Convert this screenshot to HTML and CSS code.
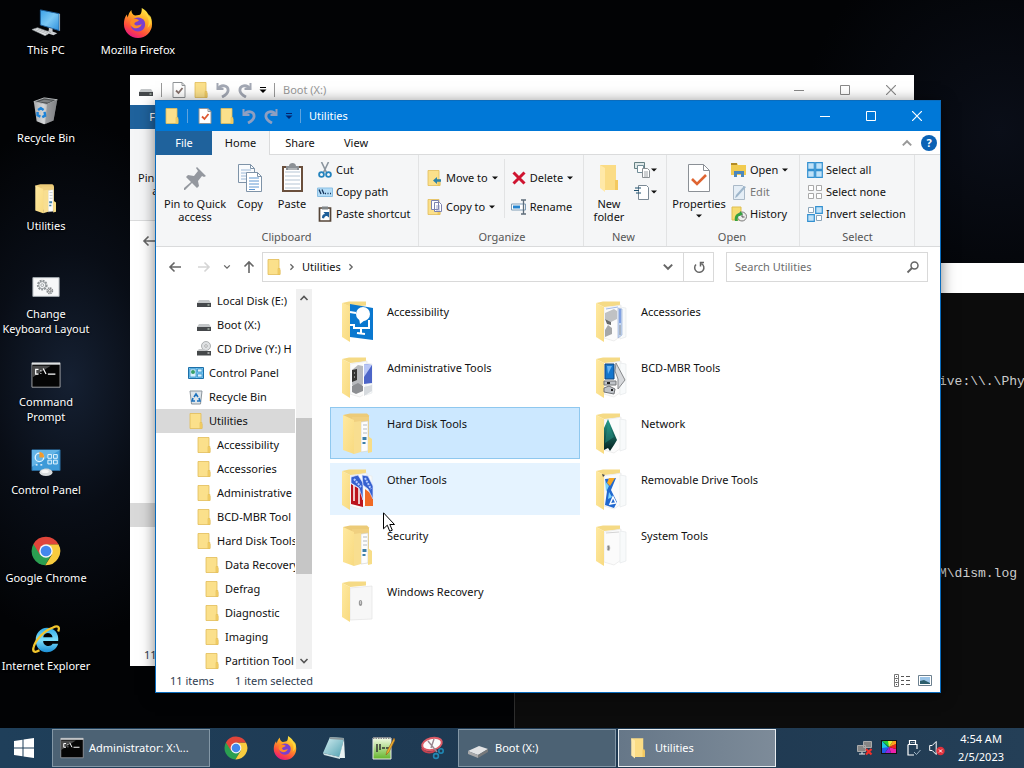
FILE: index.html
```html
<!DOCTYPE html>
<html lang="en">
<head>
    <meta charset="UTF-8">
    <title>Utilities</title>
    <link rel="stylesheet" href="styles.css">
</head>
<body>
    <!-- icon set -->
    <svg class="sprite" width="0" height="0" aria-hidden="true">
        <defs>
            <linearGradient id="gScreen" x1="0" y1="0" x2="1" y2="1"><stop offset="0" stop-color="#3aa0e8"/><stop offset=".5" stop-color="#7cc8f4"/><stop offset="1" stop-color="#2b8fdd"/></linearGradient>
            <linearGradient id="gFolder" x1="0" y1="0" x2="1" y2="1"><stop offset="0" stop-color="#ffe9a0"/><stop offset="1" stop-color="#f8da80"/></linearGradient>
            <linearGradient id="gFox" x1=".8" y1="0" x2=".3" y2="1"><stop offset="0" stop-color="#fff14a"/><stop offset=".4" stop-color="#ffa423"/><stop offset=".75" stop-color="#ff4a3d"/><stop offset="1" stop-color="#e31587"/></linearGradient>
            <linearGradient id="gIe" x1="0" y1="0" x2="0" y2="1"><stop offset="0" stop-color="#2fa9e6"/><stop offset=".5" stop-color="#7fe0fb"/><stop offset="1" stop-color="#1c8fd6"/></linearGradient>
            <linearGradient id="gBin" x1="0" y1="0" x2="1" y2="0"><stop offset="0" stop-color="#a9abad"/><stop offset=".4" stop-color="#d5d7d9"/><stop offset="1" stop-color="#8c8e90"/></linearGradient>
            <linearGradient id="gGreen" x1="0" y1="0" x2="0" y2="1"><stop offset="0" stop-color="#f4fbe6"/><stop offset="1" stop-color="#63b52a"/></linearGradient>
            <linearGradient id="gNote" x1="0" y1="0" x2="1" y2="1"><stop offset="0" stop-color="#d7f0f3"/><stop offset="1" stop-color="#4fa0b0"/></linearGradient>
            <linearGradient id="gNet" x1="0" y1="0" x2="0" y2="1"><stop offset="0" stop-color="#2aa08e"/><stop offset="1" stop-color="#05201f"/></linearGradient>
        </defs>

        <symbol id="pc" viewBox="0 0 32 32">
            <path d="M10 2l20 4v18l-20-6z" fill="url(#gScreen)" stroke="#1d5f9c"/>
            <path d="M30 6l1 .5v18l-1-.5z" fill="#9fb4c4"/>
            <path d="M19 21l4 1v3l5 2-4 2-9-3 4-2z" fill="#c8ccd0"/>
            <path d="M1 23l6-2 14 5-6 3.500z" fill="#e8eaec" stroke="#8d9296" stroke-width=".7"/>
            <path d="M4 23l13 4.600M6.500 22.300l12 4.200" stroke="#9ba0a4" stroke-width=".7"/>
        </symbol>
        <symbol id="bin" viewBox="0 0 32 32">
            <path d="M3 6l11-4 14 2-11 5z" fill="#4d5052" stroke="#b9bcbe"/>
            <path d="M8 6l6-2 9 1-5 2z" fill="#7e8183"/>
            <path d="M3 6l14 3 11-5-4 22-10 4-8-3z" fill="url(#gBin)"/>
            <path d="M17 9l11-5-4 22-9 4z" fill="#77797b" opacity=".55"/>
            <path d="M7.500 15l3-2 3 2M14.500 17l.5 4-3 1.500M10 22l-3-1.500V17" fill="none" stroke="#1d83d8" stroke-width="2.600"/>
        </symbol>
        <symbol id="openfolder" viewBox="0 0 32 42">
            <path d="M1 2l7-1.500h17l2 2v33l-12 3z" fill="#eccb78"/>
            <path d="M10 4h17v32H12z" fill="#f0d080"/>
            <path d="M19 9l7-1v30l-7 1z" fill="#fdfdfd" stroke="#d0d0c8" stroke-width=".6"/>
            <path d="M21 12h4M21 16h4M21 20h4" stroke="#b3bbc2"/>
            <path d="M20.500 24h4v3h-4zM20.500 29h3v2h-3z" fill="#3d7fa8"/>
            <path d="M26 23l4 3v13l-4 1z" fill="#f7dd88"/>
            <path d="M1 2l11 5v34L1 37z" fill="url(#gFolder)"/>
            <path d="M12 9l7-1v31l-7 2z" fill="#f8de90"/>
        </symbol>
        <symbol id="paperfolder" viewBox="0 0 32 42">
            <path d="M0 2l7-1.500h17v4L8 6z" fill="#f5da85"/>
            <path d="M8 7l17-3v31l-7 5-10-3z" fill="#fbfbfb" stroke="#e6e6e6" stroke-width=".7"/>
            <path d="M24 6l6 1v29l-6 2z" fill="#f8fafb" stroke="#e6e9eb" stroke-width=".7"/>
            <path d="M0 2l8 4v35l-8-5z" fill="url(#gFolder)"/>
        </symbol>
        <symbol id="access" viewBox="0 0 32 42">
            <path d="M0 2l7-1.500h17v4L8 6z" fill="#f5da85"/>
            <path d="M0 2l8 3v36l-8-5z" fill="url(#gFolder)"/>
            <path d="M8 3l23 4v32L8 36z" fill="#0a78cf"/>
            <circle cx="21" cy="13" r="7" fill="#fff"/><path d="M17 17l1 6 5-4z" fill="#fff"/>
            <path d="M8 11l6 1M8 24h4v3h15V19M19 28v4M15 32l8 1" fill="none" stroke="#fff" stroke-width="2"/>
        </symbol>
        <symbol id="admin" viewBox="0 0 32 42">
            <use href="#paperfolder"/>
            <path d="M10 13l6-5 5 1v18l-5 5-6-4z" fill="#b7b9bd"/>
            <path d="M10 13l5-1v11l-5 2z" fill="#333"/>
            <path d="M12 16h1M12 20h1" stroke="#ddd"/>
            <path d="M10 29l6-3 5 3v5l-7 3-4-2z" fill="#8c8e92"/>
            <path d="M22 7l8 1v18l-8 1z" fill="#4c65c8"/>
            <path d="M22 7l8 1-8 12z" fill="#b8c6f6"/>
            <path d="M22 30l8-2v6l-8 5z" fill="#d6dade"/>
            <path d="M21.500 6v33" stroke="#fff"/>
        </symbol>
        <symbol id="other" viewBox="0 0 32 42">
            <use href="#paperfolder"/>
            <path d="M9 15l12 7v16l-12-3z" fill="#bb141e"/>
            <path d="M23 20l8 6v11h-8z" fill="#f06a25"/>
            <path d="M12 15v17M17 18v17" stroke="#fff" stroke-width="1.500"/>
            <path d="M9 8l7-2 5 8v17l-4-12-8-5z" fill="#3560cf" stroke="#dce5ff" stroke-width=".7"/>
            <path d="M20 6l6 1 5 10v13l-5-10-5-4z" fill="#3560cf" stroke="#dce5ff" stroke-width=".7"/>
            <path d="M12 10l7 8M23 9l6 11" stroke="#b5cbff" stroke-width="2" stroke-dasharray="2 1"/>
        </symbol>
        <symbol id="accessories" viewBox="0 0 32 42">
            <use href="#paperfolder"/>
            <path d="M9 12l9-4 3 2v8l-6 3-6-3z" fill="#c0c2c4"/>
            <path d="M9 18l6 3v3l-4-1z" fill="#686a6c"/>
            <path d="M9 29l3-5 4 3v6l-7 3z" fill="#a5a7a9"/>
            <path d="M10 8l12-2" stroke="#9fb9e8"/>
            <path d="M22 7l4 1v26l-4 3z" fill="#c4d6f2" stroke="#9fb3d6" stroke-width=".7"/>
            <path d="M24 8v14" stroke="#6d90dc" stroke-width="1.500"/><path d="M24 24v10" stroke="#8a9196"/>
        </symbol>
        <symbol id="bcd" viewBox="0 0 32 42">
            <use href="#paperfolder"/>
            <path d="M20 6l9 17-7 9V22l-3-8z" fill="#d7d9dc" stroke="#888a8d"/>
            <path d="M9 7h9v15H9z" fill="#1476cd" stroke="#16467a"/>
            <path d="M11 9h5l-4 8z" fill="#65b3f3"/>
            <path d="M8 24h12v4H8zM8 31l5-2 6 3-1 5-10-2z" fill="#bfc3c8" stroke="#727477"/>
            <path d="M11 26h3M15 33h2" stroke="#222" stroke-width="2"/>
        </symbol>
        <symbol id="network" viewBox="0 0 32 42">
            <use href="#paperfolder"/>
            <path d="M12 6l9 21-3 5-4 6-2-3-4 2V15z" fill="url(#gNet)"/>
            <path d="M12 9l6 15-9 6z" fill="#2ba393" opacity=".4"/>
        </symbol>
        <symbol id="removable" viewBox="0 0 32 42">
            <use href="#paperfolder"/>
            <path d="M9 10l11-1-5 12 6 12-3 6-9-3 2-14z" fill="#2168cf"/>
            <path d="M13 9h6l-5 8-3-3z" fill="#f6a623"/>
            <path d="M9 12l4 5-3 6zM13 23l3 5-4 2z" fill="#7ad4fb"/>
            <path d="M14 35l3-7 3 6z" fill="none" stroke="#fff" stroke-width="1.500"/>
            <path d="M6 5l3 1-2 2z" fill="#444"/>
        </symbol>
        <symbol id="system" viewBox="0 0 32 42">
            <use href="#paperfolder"/>
            <path d="M10 8l13-1" stroke="#d4d4d4"/>
            <ellipse cx="12.500" cy="23" rx="1.700" ry="3" fill="#bbb"/><path d="M12 21l1 2-1 2" stroke="#777" fill="none"/>
        </symbol>
        <symbol id="recovery" viewBox="0 0 32 42">
            <path d="M0 2l7-1.500h17v4L8 6z" fill="#f5da85"/>
            <path d="M8 7l22-2v33l-22 1z" fill="#f7f7f7" stroke="#e3e3e3" stroke-width=".7"/>
            <path d="M0 2l8 4v35l-8-5z" fill="url(#gFolder)"/>
            <ellipse cx="18.500" cy="22" rx="1.700" ry="3" fill="#999"/><path d="M18.500 20v3" stroke="#ccc"/>
        </symbol>
        <symbol id="gears" viewBox="0 0 32 32">
            <path d="M2 6h28v20H2z" fill="#f7f8f9" stroke="#aab0b5"/>
            <circle cx="12" cy="14" r="4.500" fill="none" stroke="#8e9396" stroke-width="2.400" stroke-dasharray="2 1"/>
            <circle cx="12" cy="14" r="3.800" fill="none" stroke="#9da2a5"/>
            <circle cx="12" cy="14" r="1.500" fill="none" stroke="#9da2a5"/>
            <circle cx="20" cy="20" r="2.800" fill="none" stroke="#85898c" stroke-width="1.800" stroke-dasharray="1.500 .7"/>
            <circle cx="20" cy="20" r="1.300" fill="none" stroke="#777"/>
        </symbol>
        <symbol id="cmd" viewBox="0 0 32 28">
            <path d="M1 1h30v26H1z" fill="#050505" stroke="#a5a8ab"/>
            <path d="M1 1h30v2H1z" fill="#dfe2e4"/>
            <path d="M1 4h20L1 17z" fill="#4a4a4a"/>
            <path d="M8 8H5v5h3M10.500 9v1M10.500 12v1M13 7l3 6M18 13h8" fill="none" stroke="#fff" stroke-width="1.300"/>
        </symbol>
        <symbol id="cpanel" viewBox="0 0 32 32">
            <path d="M1 2h30v22H1z" fill="#3d9ad8" stroke="#2b6b9c"/>
            <path d="M1 2h30L1 20z" fill="#63b4e6"/>
            <circle cx="9" cy="10" r="4.500" fill="none" stroke="#dff3ff" stroke-width="1.400"/>
            <path d="M9 10V4a6 6 0 0 1 5 6z" fill="#f29b2c"/>
            <path d="M18 7h4v4h-4zM24 7h4v4h-4zM18 13h4v4h-4zM24 13h4v4h-4z" fill="#4ba6dd" stroke="#e8f6ff"/>
            <path d="M5 18h2M10 18h2" stroke="#fff" stroke-width="1.500"/>
            <path d="M14 22h5v3h-5z" fill="#c5c8ca"/>
            <ellipse cx="16" cy="26" rx="7" ry="3.800" fill="#d9dcde"/><ellipse cx="15" cy="25" rx="4" ry="1.700" fill="#f7f7f7"/>
        </symbol>
        <symbol id="cpanelsmall" viewBox="0 0 16 16">
            <path d="M.5 2.500h15v11H.5z" fill="#74c6f3" stroke="#1d6fa8"/>
            <path d="M2 4h6v8H2zM9.500 4H14v3H9.500zM9.500 9H14v3H9.500z" fill="#d9f2ff" stroke="#2e86bd" stroke-width=".7"/>
            <circle cx="5" cy="7" r="2" fill="#38a169"/>
        </symbol>
        <symbol id="binsmall" viewBox="0 0 16 16">
            <path d="M2 2h12l-1.500 13h-9z" fill="#dfe5ea" stroke="#8d969d"/>
            <path d="M6 8l2-3 2 3M11 9l1 3H9M7 12H4l1-3" fill="none" stroke="#1d72bd" stroke-width="1.600"/>
        </symbol>
        <symbol id="chrome" viewBox="0 0 32 32">
            <path d="M2.600 8.500A15.300 15.300 0 0 0 15.200 31.300L22 19.500 16 16z" fill="#2b9f51"/>
            <path d="M29.300 8.700A15.300 15.300 0 0 1 15.200 31.300L22.300 19.700 16 8.700z" fill="#f8cc3f"/>
            <path d="M2.600 8.500l7 11.500L16 8.700h13.300A15.300 15.300 0 0 0 2.600 8.500z" fill="#e0453a"/>
            <circle cx="16" cy="16" r="7.200" fill="#f4f6f8"/><circle cx="16" cy="16" r="5.700" fill="#4387ec"/>
        </symbol>
        <symbol id="firefox" viewBox="0 0 32 32">
            <path d="M20 0c5 3 7 6 7 8 3 2 4 5 4 9a15 15 0 0 1-30 0c0-4 1-7 3-10l1 3c1-4 2-6 4-8 0 4 2 5 4 6 3-1 5 0 6-2 1-2 1-4 1-6z" fill="url(#gFox)"/>
            <path d="M10 13c3-4 10-4 13 1 2 5-1 11-7 11s-10-6-6-12z" fill="#7b3fd0"/>
            <path d="M9 12c2-1 5-1 8 1-1 2-4 1-5 4 2 3 6 1 8 0-2 6-9 6-12 1-1-2 0-4 1-6z" fill="#ff8a25"/>
            <path d="M23 5c4 4 6 10 3 16 3-2 5-6 4-11-1-2-3-4-7-5z" fill="#ffdb3d" opacity=".8"/>
        </symbol>
        <symbol id="ie" viewBox="0 0 32 32">
            <path d="M17 4c8 0 13 6 12 14H13c0 6 8 7 10 3h6c-2 6-7 9-12 9C9 30 5 24 5 17S10 4 17 4zm-4 10h10c-1-6-9-6-10 0z" fill="url(#gIe)" fill-rule="evenodd"/>
            <path d="M29 8c2-5 0-7-6-4C14 7 5 17 3 24c-2 6 1 7 6 4" fill="none" stroke="#f3c62e" stroke-width="2.400"/>
        </symbol>
        <symbol id="folder" viewBox="0 0 14 16">
            <path d="M1 .5h11v10l1 1v4H1z" fill="#fbe08b" stroke="#e2bd58" stroke-width=".8"/>
            <path d="M11 9.500h2v6h-2z" fill="#f6d167" stroke="#e2bd58" stroke-width=".6"/>
        </symbol>
        <symbol id="drive" viewBox="0 0 14 16">
            <path d="M2 7h10l2 3H0z" fill="#c4c7c9"/>
            <path d="M0 10h14v4H0z" fill="#45484b"/><path d="M10.500 12h2" stroke="#d4e6d4"/>
        </symbol>
        <symbol id="cddrive" viewBox="0 0 14 16">
            <circle cx="9" cy="5" r="4.500" fill="#dfe1e3" stroke="#9c9fa1" stroke-width=".8"/><circle cx="9" cy="5" r="1.300" fill="#fff" stroke="#8c8f91" stroke-width=".7"/>
            <path d="M0 10h14v4.500H0z" fill="#45484a"/><path d="M2 8h5l2 2H0z" fill="#c6c8ca"/><path d="M10.500 12h2" stroke="#fff"/>
        </symbol>
        <symbol id="checkdoc" viewBox="0 0 14 16">
            <path d="M1 .5h9l3 3v12H1z" fill="#fff" stroke="#8f9396"/><path d="M10 .5v3h3" fill="none" stroke="#8f9396"/>
            <path d="M4 8.500l2.500 2.500L10.500 6" fill="none" stroke="currentColor" stroke-width="1.800"/>
        </symbol>
        <symbol id="undo" viewBox="0 0 14 16">
            <path d="M1.500 1v6h6" fill="none" stroke="currentColor" stroke-width="2"/><path d="M2 7c3-5 11-4 10 2-.5 3-3 4.500-6 6" fill="none" stroke="currentColor" stroke-width="2.800"/>
        </symbol>
        <symbol id="caret" viewBox="0 0 8 8"><path d="M1 2.500h6L4 5.500z" fill="currentColor"/></symbol>
        <symbol id="qat" viewBox="0 0 8 8"><path d="M1 1.500h6" stroke="currentColor"/><path d="M.5 3.500h7L4 7z" fill="currentColor"/></symbol>
        <symbol id="min" viewBox="0 0 10 10"><path d="M0 5.500h10" stroke="currentColor"/></symbol>
        <symbol id="max" viewBox="0 0 10 10"><path d="M.5.5h9v9h-9z" fill="none" stroke="currentColor"/></symbol>
        <symbol id="close" viewBox="0 0 10 10"><path d="M0 0l10 10M10 0L0 10" stroke="currentColor" stroke-width="1.200"/></symbol>
        <symbol id="pin" viewBox="0 0 32 32">
            <path d="M18 5l9 9-2 1-2-1-4 5 1 5-2 2-5-5-7 7H5v-2l7-6-5-5 2-2 6 1 4-5-2-3z" fill="#94989f"/>
        </symbol>
        <symbol id="copy" viewBox="0 0 32 32">
            <path d="M4.500 2.500h12l4 4v14h-16z" fill="#f9fbfd" stroke="#7e93a8"/><path d="M16.500 2.500v4h4" fill="none" stroke="#7e93a8"/>
            <path d="M7 8h10M7 11h10M7 14h10M7 17h10" stroke="#9cb9d8"/>
            <path d="M12.500 10.500h11l4 4v15h-15z" fill="#fff" stroke="#7e93a8"/><path d="M23.500 10.500v4h4" fill="none" stroke="#7e93a8"/>
            <path d="M15 16h10M15 19h10M15 22h10M15 25h10M15 27.500h6" stroke="#5e98d2"/>
        </symbol>
        <symbol id="paste" viewBox="0 0 32 32">
            <path d="M7 5h19v24H7z" fill="#fff" stroke="#6a4f3c" stroke-width="2"/>
            <path d="M9 10h15M9 14h15M9 18h15M9 22h15M9 26h15" stroke="#b5c5d4"/>
            <path d="M10 4h3c0-4 7-4 7 0h3v4H10z" fill="#8c9196"/><path d="M12 7h9" stroke="#d7dadc"/>
        </symbol>
        <symbol id="cut" viewBox="0 0 16 16">
            <path d="M4.500 0l5 10.500M11.500 0l-5 10.500" stroke="#8b959e" stroke-width="1.600"/>
            <circle cx="4.500" cy="12.500" r="2.400" fill="none" stroke="#2483bd" stroke-width="1.800"/><circle cx="11.500" cy="12.500" r="2.400" fill="none" stroke="#2483bd" stroke-width="1.800"/>
        </symbol>
        <symbol id="path" viewBox="0 0 16 16">
            <path d="M.5 4h15v8.500H.5z" fill="#b3dcf7" stroke="#8bc0e4"/><path d="M2 5.500l2 4.500M5 5.500L7 10" stroke="#15355c" stroke-width="1.300"/><path d="M8 9.500h1M10.500 9.500h1M13 9.500h1" stroke="#15355c" stroke-width="1.500"/>
        </symbol>
        <symbol id="shortcut" viewBox="0 0 16 16">
            <path d="M2.500 2h11v13h-11z" fill="#fff" stroke="#554538" stroke-width="1.700"/><path d="M5 .5h6v3H5z" fill="#7f8588"/>
            <path d="M5 12c0-3 1-4 3-4l-1.500-2H12v5.500L10 10c-1.500 0-2.500.5-3 2.500z" fill="#1e5e98"/>
        </symbol>
        <symbol id="moveto" viewBox="0 0 16 16"><use href="#folder" width="14" height="16"/><path d="M6 10.500L10 7v2.300h4v2.500h-4V14z" fill="#2d82a8"/></symbol>
        <symbol id="copyto" viewBox="0 0 16 16"><use href="#folder" width="14" height="16"/><path d="M4.500 1.500h7v9h-7zM7.500 3.500h5l2 2v7h-7z" fill="#fff" stroke="#7d82ae"/><path d="M9 7h4M9 9h4M9 11h4" stroke="#8a93bd" stroke-width=".8"/></symbol>
        <symbol id="delete" viewBox="0 0 16 16"><path d="M2.500 2.500l11 11M13.500 2.500l-11 11" stroke="#cf1430" stroke-width="3"/></symbol>
        <symbol id="rename" viewBox="0 0 16 16"><path d="M.5 5h14v6H.5z" fill="#fff" stroke="#7f9cb5"/><path d="M2 6.500h7v3H2z" fill="#2484cf"/><path d="M10 1h5M10 15h5M12.500 1v14" stroke="#5d6c7a" stroke-width="1.300"/></symbol>
        <symbol id="newfolder" viewBox="0 0 32 32"><path d="M7 3h16v15l2 2v8H12z" fill="#fbdc85"/><path d="M7 3l5 3v24l-5-4z" fill="#ffe9a8"/><path d="M22 18h3v10h-3z" fill="#f4c95e"/></symbol>
        <symbol id="newitem" viewBox="0 0 16 16"><path d="M.5.5h10v6H.5z" fill="#dfe8e8" stroke="#658082"/><path d="M3.500 3.500h6v7h-6z" fill="#fff" stroke="#718d98"/><path d="M8.500 6.500h5l2 2v7h-7z" fill="#fff" stroke="#8a8f93"/><path d="M10 10h4M10 12h4M10 14h4" stroke="#9ca1a5"/></symbol>
        <symbol id="easy" viewBox="0 0 16 16"><path d="M4.500 1.500h8l2 2v12h-10z" fill="#fff" stroke="#7b8995"/><path d="M1 4h6M0 6.500h5M2 9h5" stroke="#1f506e" stroke-width="1.200"/></symbol>
        <symbol id="props" viewBox="0 0 32 32"><path d="M5.500 2.500h15l6 6v21h-21z" fill="#fff" stroke="#8b9096"/><path d="M20.500 2.500v6h6" fill="none" stroke="#8b9096"/><path d="M9 17l5 5 9-9" fill="none" stroke="#df6532" stroke-width="2.600"/></symbol>
        <symbol id="open" viewBox="0 0 16 16"><path d="M0 1h6l1 2h8v10H0z" fill="#f1cb50"/><path d="M0 1h6v2H0z" fill="#b38b25"/><path d="M3 15V9h10v6h-3v-3H6v3z" fill="#4b87bd"/></symbol>
        <symbol id="edit" viewBox="0 0 16 16"><path d="M2.500 1.500h9l2 2v12h-11z" fill="#e5eef6" stroke="#aab9c7"/><path d="M15 3L6 13l-2 1 1-3 8-9z" fill="#9eb6cb"/></symbol>
        <symbol id="history" viewBox="0 0 16 16"><path d="M1 1h9v13H1z" fill="#f6dc72" stroke="#dfbe50"/><circle cx="11" cy="10.500" r="4.500" fill="#eee" stroke="#7a7a7a"/><path d="M11 8v3h2.500" fill="none" stroke="#555"/><path d="M4 15c-1-4 1-8 5-8v-2l3 3-3 2c-2 0-3 2-2 5z" fill="#35a142"/></symbol>
        <symbol id="selall" viewBox="0 0 16 16"><path d="M.7.7h6.600v6.600H.7zM8.700.7h6.600v6.600H8.700zM.7 8.700h6.600v6.600H.7zM8.700 8.700h6.600v6.600H8.700z" fill="#c0e2f8" stroke="#3290d0" stroke-width="1.200"/></symbol>
        <symbol id="selnone" viewBox="0 0 16 16"><path d="M1.500 1.500h5v5h-5zM9.500 1.500h5v5h-5zM1.500 9.500h5v5h-5zM9.500 9.500h5v5h-5z" fill="#fff" stroke="#a9a9a9"/></symbol>
        <symbol id="selinv" viewBox="0 0 16 16"><path d="M1.500 1.500h5v5h-5zM9.500 9.500h5v5h-5z" fill="#fff" stroke="#8aa5ba"/><path d="M8.700.7h6.600v6.600H8.700zM.7 8.700h6.600v6.600H.7z" fill="#c0e2f8" stroke="#3290d0" stroke-width="1.200"/></symbol>
        <symbol id="back" viewBox="0 0 14 14"><path d="M13 7H2M6.500 2.500L2 7l4.500 4.500" fill="none" stroke="currentColor" stroke-width="1.600"/></symbol>
        <symbol id="chev" viewBox="0 0 10 10"><path d="M1.500 3l3.500 3.500L8.500 3" fill="none" stroke="currentColor" stroke-width="1.600"/></symbol>
        <symbol id="refresh" viewBox="0 0 14 14"><path d="M4 4.500a4.600 4.600 0 1 0 5.500-.8M12 2.500H8.500V6.500" fill="none" stroke="currentColor" stroke-width="1.500"/></symbol>
        <symbol id="lens" viewBox="0 0 14 14"><circle cx="8.500" cy="5.500" r="3.500" fill="none" stroke="currentColor" stroke-width="1.500"/><path d="M6 8l-4.500 4.500" stroke="currentColor" stroke-width="1.800"/></symbol>
        <symbol id="details" viewBox="0 0 16 13"><path d="M.5.5h4v12h-4zM.5 4.500h4M.5 8.500h4" fill="none" stroke="#777"/><path d="M2 2.500h1M2 6.500h1M2 10.500h1M7 2.500h3M12 2.500h4M7 6.500h3M12 6.500h4M7 10.500h3M12 10.500h4" stroke="#555"/></symbol>
        <symbol id="tiles" viewBox="0 0 14 12"><path d="M.5.5h13v10H.5z" fill="#fff" stroke="#6d8190"/><path d="M2 2h10v7H2z" fill="#9cc5e8"/><path d="M2 9V6l4-1 6 3v1z" fill="#2b5d6c"/></symbol>
        <symbol id="winlogo" viewBox="0 0 20 20"><path d="M0 3l8.500-1.200v7.700H0zM9.500 1.600L20 0v9.500H9.500zM0 10.500h8.500v7.700L0 17zM9.500 10.500H20V20L9.500 18.400z" fill="#fff"/></symbol>
        <symbol id="notepad" viewBox="0 0 24 24"><path d="M8 1l14 1-4 19L1 17z" fill="url(#gNote)"/><path d="M8 1l14 1-.5 2-14-1z" fill="#8d989c"/><path d="M22 3l1 19-6 0z" fill="#e9f2f3"/><path d="M1 17l17 4v2L2 19z" fill="#cfe3e6"/></symbol>
        <symbol id="npp" viewBox="0 0 24 24"><path d="M2 2h18v21H2z" fill="url(#gGreen)" stroke="#e8e8e8"/><path d="M2 2h18" stroke="#888" stroke-width="2" stroke-dasharray="1.500 1"/><path d="M6 8v8M9 8v6M11 12h3M15 12h3" stroke="#333" stroke-width="1.500"/><path d="M23 2l-7 13-1 4 3-3 6-12z" fill="#efb12c" stroke="#935b22" stroke-width=".6"/></symbol>
        <symbol id="snip" viewBox="0 0 24 24"><ellipse cx="12" cy="8" rx="10" ry="6" fill="#fbfbfb" stroke="#dc5b66" stroke-width="2" transform="rotate(-14 12 8)"/><path d="M2 12c2 5 9 6 14 2" fill="none" stroke="#c64250" stroke-width="2"/><path d="M8 5l9 11M14 3l-3 9" stroke="#9a8791" stroke-width="1.400"/><circle cx="16" cy="20" r="2.400" fill="none" stroke="#2089b5" stroke-width="1.600"/><circle cx="21" cy="15" r="2.200" fill="none" stroke="#2089b5" stroke-width="1.600"/></symbol>
        <symbol id="taskdrive" viewBox="0 0 24 24"><path d="M2 15l11-5 9 3-10 6z" fill="#e2e3e4"/><path d="M2 15l10 4v3L2 18z" fill="#aaa"/><path d="M12 19l10-6v3l-10 6z" fill="#77797b"/></symbol>
        <symbol id="netx" viewBox="0 0 16 16"><path d="M6.500 1.500h8v6h-8zM.5 5.500h8v6h-8z" fill="#858585" stroke="#aaa"/><path d="M2 14h6M5 12v2" stroke="#eee"/><path d="M9 9l5.500 5.500M14.500 9L9 14.500" stroke="#f0302a" stroke-width="2.200"/></symbol>
        <symbol id="palette" viewBox="0 0 16 16"><path d="M0 0h16v14H0z" fill="#111"/><path d="M1 1h7v6z" fill="#23cf3c"/><path d="M1 1v7h7z" fill="#19c9df"/><path d="M1 8v5h3l4-6z" fill="#245de8"/><path d="M4 13h6L8 7z" fill="#9226dc"/><path d="M10 13h5V9L8 7z" fill="#ec21ac"/><path d="M15 9V4L8 7z" fill="#ee2720"/><path d="M15 4V1h-3L8 7z" fill="#ffa01c"/><path d="M12 1H7l1 6z" fill="#e2f039"/></symbol>
        <symbol id="usb" viewBox="0 0 16 16"><path d="M4.500.5h6v4h-6zM3 4.500h9V9M3 4.500v10.500h6" fill="none" stroke="#fff" stroke-width="1.200"/><path d="M6.500 2.500h.8M8.500 2.500h.8" stroke="#fff"/><path d="M9 12l2.500 2.500L15.500 10" fill="none" stroke="#9fb4c5"/></symbol>
        <symbol id="mute" viewBox="0 0 16 16"><path d="M.7 5.500h2.500l4-4v13l-4-4H.7z" fill="none" stroke="#fff"/><circle cx="11.500" cy="11" r="4.200" fill="#e0313c"/><path d="M10 9.500l3 3M13 9.500l-3 3" stroke="#fff"/></symbol>
    </svg>

    <main class="desktop">
        <div class="shortcuts">
            <a class="shortcut" href="#"><svg><use href="#pc"/></svg><span>This PC</span></a>
            <a class="shortcut" href="#"><svg><use href="#bin"/></svg><span>Recycle Bin</span></a>
            <a class="shortcut" href="#"><svg><use href="#openfolder"/></svg><span>Utilities</span></a>
            <a class="shortcut" href="#"><svg><use href="#gears"/></svg><span>Change<br>Keyboard Layout</span></a>
            <a class="shortcut" href="#"><svg><use href="#cmd"/></svg><span>Command<br>Prompt</span></a>
            <a class="shortcut" href="#"><svg><use href="#cpanel"/></svg><span>Control Panel</span></a>
            <a class="shortcut" href="#"><svg><use href="#chrome"/></svg><span>Google Chrome</span></a>
            <a class="shortcut" href="#"><svg><use href="#ie"/></svg><span>Internet Explorer</span></a>
            <a class="shortcut" href="#"><svg><use href="#firefox"/></svg><span>Mozilla Firefox</span></a>
        </div>

        <!-- command prompt -->
        <section class="console">
            <div class="console-title"></div>
            <div class="console-text">
                <p>ive:\\.\Phy</p>
                <p>M\dism.log</p>
            </div>
        </section>

        <!-- Boot (X:) -->
        <section class="window boot">
            <header class="titlebar">
                <svg class="i16"><use href="#drive"/></svg>
                <span class="bar"></span>
                <button class="qbtn check"><svg class="i16"><use href="#checkdoc"/></svg></button>
                <button class="qbtn"><svg class="i16"><use href="#folder"/></svg></button>
                <button class="qbtn"><svg class="i16"><use href="#undo"/></svg></button>
                <button class="qbtn"><svg class="i16 flip"><use href="#undo"/></svg></button>
                <button class="qdrop"><svg class="i8"><use href="#qat"/></svg></button>
                <span class="bar last"></span>
                <h1>Boot (X:)</h1>
                <div class="winbtns">
                    <button><svg><use href="#min"/></svg></button>
                    <button><svg><use href="#max"/></svg></button>
                    <button><svg><use href="#close"/></svg></button>
                </div>
            </header>
            <nav class="tabs"><button class="tab file">File</button></nav>
            <div class="ribbon">
                <div class="group clipboard">
                    <div class="tools">
                        <button class="big pinbtn"><svg><use href="#pin"/></svg><span>Pin to Quick access</span></button>
                    </div>
                </div>
            </div>
            <div class="address"><button class="nav"><svg><use href="#back"/></svg></button></div>
            <div class="boot-body"><div class="boot-row"></div></div>
            <footer class="status"><span>11 items</span></footer>
        </section>

        <!-- Utilities -->
        <section class="window utilities">
            <header class="titlebar">
                <svg class="i16"><use href="#folder"/></svg>
                <span class="bar"></span>
                <button class="qbtn check"><svg class="i16"><use href="#checkdoc"/></svg></button>
                <button class="qbtn"><svg class="i16"><use href="#folder"/></svg></button>
                <button class="qbtn"><svg class="i16"><use href="#undo"/></svg></button>
                <button class="qbtn"><svg class="i16 flip"><use href="#undo"/></svg></button>
                <button class="qdrop"><svg class="i8"><use href="#qat"/></svg></button>
                <span class="bar last"></span>
                <h1>Utilities</h1>
                <div class="winbtns">
                    <button><svg><use href="#min"/></svg></button>
                    <button><svg><use href="#max"/></svg></button>
                    <button><svg><use href="#close"/></svg></button>
                </div>
            </header>
            <nav class="tabs">
                <button class="tab file">File</button>
                <button class="tab active">Home</button>
                <button class="tab">Share</button>
                <button class="tab">View</button>
                <button class="collapse"><svg><use href="#chev"/></svg></button>
                <button class="help">?</button>
            </nav>
            <div class="ribbon">
                <div class="group clipboard">
                    <div class="tools">
                        <button class="big pinbtn"><svg><use href="#pin"/></svg><span>Pin to Quick access</span></button>
                        <button class="big"><svg><use href="#copy"/></svg><span>Copy</span></button>
                        <button class="big"><svg><use href="#paste"/></svg><span>Paste</span></button>
                        <div class="stack">
                            <button><svg class="i16"><use href="#cut"/></svg>Cut</button>
                            <button><svg class="i16"><use href="#path"/></svg>Copy path</button>
                            <button><svg class="i16"><use href="#shortcut"/></svg>Paste shortcut</button>
                        </div>
                    </div>
                    <h2>Clipboard</h2>
                </div>
                <div class="group organize">
                    <div class="tools">
                        <div class="stack two">
                            <button><svg class="i16"><use href="#moveto"/></svg>Move to<svg class="i8"><use href="#caret"/></svg></button>
                            <button><svg class="i16"><use href="#copyto"/></svg>Copy to<svg class="i8"><use href="#caret"/></svg></button>
                        </div>
                        <div class="stack two ruled">
                            <button><svg class="i16"><use href="#delete"/></svg>Delete<svg class="i8"><use href="#caret"/></svg></button>
                            <button><svg class="i16"><use href="#rename"/></svg>Rename</button>
                        </div>
                    </div>
                    <h2>Organize</h2>
                </div>
                <div class="group new">
                    <div class="tools">
                        <button class="big"><svg><use href="#newfolder"/></svg><span>New folder</span></button>
                        <div class="stack tight">
                            <button><svg class="i16"><use href="#newitem"/></svg><svg class="i8"><use href="#caret"/></svg></button>
                            <button><svg class="i16"><use href="#easy"/></svg><svg class="i8"><use href="#caret"/></svg></button>
                        </div>
                    </div>
                    <h2>New</h2>
                </div>
                <div class="group open">
                    <div class="tools">
                        <button class="big props"><svg><use href="#props"/></svg><span>Properties</span><svg class="i8"><use href="#caret"/></svg></button>
                        <div class="stack">
                            <button><svg class="i16"><use href="#open"/></svg>Open<svg class="i8"><use href="#caret"/></svg></button>
                            <button disabled><svg class="i16"><use href="#edit"/></svg>Edit</button>
                            <button><svg class="i16"><use href="#history"/></svg>History</button>
                        </div>
                    </div>
                    <h2>Open</h2>
                </div>
                <div class="group select">
                    <div class="tools">
                        <div class="stack">
                            <button><svg class="i16"><use href="#selall"/></svg>Select all</button>
                            <button><svg class="i16"><use href="#selnone"/></svg>Select none</button>
                            <button><svg class="i16"><use href="#selinv"/></svg>Invert selection</button>
                        </div>
                    </div>
                    <h2>Select</h2>
                </div>
            </div>

            <div class="address">
                <button class="nav"><svg><use href="#back"/></svg></button>
                <button class="nav" disabled><svg class="flip"><use href="#back"/></svg></button>
                <button class="nav recent"><svg><use href="#chev"/></svg></button>
                <button class="nav"><svg class="up"><use href="#back"/></svg></button>
                <div class="crumbs">
                    <svg class="i16"><use href="#folder"/></svg>
                    <svg class="i8 right"><use href="#chev"/></svg>
                    <a href="#">Utilities</a>
                    <svg class="i8 right"><use href="#chev"/></svg>
                    <button class="history"><svg><use href="#chev"/></svg></button>
                    <button class="refresh"><svg><use href="#refresh"/></svg></button>
                </div>
                <label class="search">
                    <input type="text" placeholder="Search Utilities" aria-label="Search Utilities">
                    <svg><use href="#lens"/></svg>
                </label>
            </div>

            <div class="content">
                <ul class="tree">
                    <li class="l2"><svg class="i16"><use href="#drive"/></svg><a href="#">Local Disk (E:)</a></li>
                    <li class="l2"><svg class="i16"><use href="#drive"/></svg><a href="#">Boot (X:)</a></li>
                    <li class="l2"><svg class="i16"><use href="#cddrive"/></svg><a href="#">CD Drive (Y:) H</a></li>
                    <li><svg class="i16"><use href="#cpanelsmall"/></svg><a href="#">Control Panel</a></li>
                    <li><svg class="i16"><use href="#binsmall"/></svg><a href="#">Recycle Bin</a></li>
                    <li class="current"><svg class="i16"><use href="#folder"/></svg><a href="#">Utilities</a></li>
                    <li class="l2"><svg class="i16"><use href="#folder"/></svg><a href="#">Accessibility</a></li>
                    <li class="l2"><svg class="i16"><use href="#folder"/></svg><a href="#">Accessories</a></li>
                    <li class="l2"><svg class="i16"><use href="#folder"/></svg><a href="#">Administrative</a></li>
                    <li class="l2"><svg class="i16"><use href="#folder"/></svg><a href="#">BCD-MBR Tool</a></li>
                    <li class="l2"><svg class="i16"><use href="#folder"/></svg><a href="#">Hard Disk Tools</a></li>
                    <li class="l3"><svg class="i16"><use href="#folder"/></svg><a href="#">Data Recovery</a></li>
                    <li class="l3"><svg class="i16"><use href="#folder"/></svg><a href="#">Defrag</a></li>
                    <li class="l3"><svg class="i16"><use href="#folder"/></svg><a href="#">Diagnostic</a></li>
                    <li class="l3"><svg class="i16"><use href="#folder"/></svg><a href="#">Imaging</a></li>
                    <li class="l3"><svg class="i16"><use href="#folder"/></svg><a href="#">Partition Tool</a></li>
                </ul>
                <div class="scrollbar">
                    <button><svg class="turn"><use href="#chev"/></svg></button>
                    <div class="track"><div class="thumb"></div></div>
                    <button><svg><use href="#chev"/></svg></button>
                </div>
                <div class="files">
                    <a class="tile" href="#"><svg><use href="#access"/></svg>Accessibility</a>
                    <a class="tile" href="#"><svg><use href="#accessories"/></svg>Accessories</a>
                    <a class="tile" href="#"><svg><use href="#admin"/></svg>Administrative Tools</a>
                    <a class="tile" href="#"><svg><use href="#bcd"/></svg>BCD-MBR Tools</a>
                    <a class="tile selected" href="#"><svg><use href="#openfolder"/></svg>Hard Disk Tools</a>
                    <a class="tile" href="#"><svg><use href="#network"/></svg>Network</a>
                    <a class="tile hover" href="#"><svg><use href="#other"/></svg>Other Tools</a>
                    <a class="tile" href="#"><svg><use href="#removable"/></svg>Removable Drive Tools</a>
                    <a class="tile" href="#"><svg><use href="#openfolder"/></svg>Security</a>
                    <a class="tile" href="#"><svg><use href="#system"/></svg>System Tools</a>
                    <a class="tile" href="#"><svg><use href="#recovery"/></svg>Windows Recovery</a>
                </div>
            </div>
            <footer class="status">
                <span>11 items</span>
                <span>1 item selected</span>
                <div class="views">
                    <button><svg class="v1"><use href="#details"/></svg></button>
                    <button><svg class="v2"><use href="#tiles"/></svg></button>
                </div>
            </footer>
        </section>

        <svg class="cursor" viewBox="0 0 12 20"><path d="M.5.800v16l3.800-3.600 2.400 6 2.600-1-2.500-5.700h4.700z" fill="#fff" stroke="#000"/></svg>
    </main>

    <footer class="taskbar">
        <button class="start"><svg><use href="#winlogo"/></svg></button>
        <button class="task"><svg><use href="#cmd"/></svg>Administrator: X:\...</button>
        <div class="pinned">
            <button><svg><use href="#chrome"/></svg></button>
            <button><svg><use href="#firefox"/></svg></button>
            <button><svg><use href="#notepad"/></svg></button>
            <button><svg><use href="#npp"/></svg></button>
            <button><svg><use href="#snip"/></svg></button>
        </div>
        <button class="task"><svg><use href="#taskdrive"/></svg>Boot (X:)</button>
        <button class="task active"><svg><use href="#newfolder"/></svg>Utilities</button>
        <div class="tray">
            <svg><use href="#netx"/></svg>
            <svg><use href="#palette"/></svg>
            <svg><use href="#usb"/></svg>
            <svg><use href="#mute"/></svg>
            <time>4:54 AM<br>2/5/2023</time>
        </div>
    </footer>
</body>
</html>
```

FILE: styles.css
```css
* {
    box-sizing: border-box;
}
body {
    margin: 0;
    height: 100vh;
    display: flex;
    flex-direction: column;
    overflow: hidden;
    background: #020305;
    font-family: "Noto Sans", "Open Sans", sans-serif;
    font-size: 11px;
    line-height: 16px;
    color: #111;
}
button {
    padding: 0;
    border: 0;
    background: none;
    font: inherit;
    color: inherit;
}
a {
    color: inherit;
    text-decoration: none;
}
h1, h2, p, ul {
    margin: 0;
    padding: 0;
    font-size: 11px;
    font-weight: normal;
    list-style: none;
}
svg {
    display: block;
    flex: none;
}
.sprite {
    position: absolute;
}
.i16 {
    width: 16px;
    height: 16px;
}
.i8 {
    width: 8px;
    height: 8px;
}
.flip {
    transform: scaleX(-1);
}
.up {
    transform: rotate(90deg);
}
.turn {
    transform: rotate(180deg);
}
.right {
    transform: rotate(-90deg);
}

/* desktop */
.desktop {
    flex: 1;
    position: relative;
    overflow: hidden;
    background:
        radial-gradient(ellipse 160px 260px at 70px 380px, #152032, rgba(13, 20, 33, 0.6) 50%, transparent),
        radial-gradient(ellipse 200px 200px at 1000px 130px, #0a0e18, transparent),
        #020305;
}
.shortcuts {
    display: grid;
    grid-auto-flow: column;
    grid-template-rows: repeat(8, 88px);
    grid-auto-columns: 92px;
    width: max-content;
    padding-top: 8px;
}
.shortcut {
    display: flex;
    flex-direction: column;
    align-items: center;
    gap: 4px;
    color: #fff;
    line-height: 15px;
    text-align: center;
    text-shadow: 0 1px 2px #000;
}
.shortcut svg {
    width: 30px;
    height: 30px;
}

/* windows */
.window {
    position: absolute;
    display: flex;
    flex-direction: column;
    background: #fff;
}
.boot {
    left: 130px;
    top: 75px;
    width: 784px;
    height: 591px;
}
.utilities {
    left: 155px;
    top: 100px;
    width: 786px;
    height: 593px;
    border: 1px solid #0a6cbd;
    box-shadow: 0 2px 14px rgba(0, 0, 0, 0.5);
}
.titlebar {
    flex: none;
    display: flex;
    align-items: center;
    height: 30px;
    padding-left: 8px;
    color: #000;
}
.titlebar h1 {
    flex: 1;
}
.boot h1 {
    color: #999;
}
.utilities .titlebar {
    background: #0078d7;
}
.utilities h1, .utilities .winbtns {
    color: #fff;
}
.bar {
    width: 1px;
    height: 14px;
    margin: 0 6px 0 7px;
    background: #999;
}
.bar.last {
    margin: 0 8px 0 4px;
}
.utilities .bar {
    background: #5fa3de;
}
.qbtn {
    width: 22px;
    display: flex;
    justify-content: center;
    color: #8e9fc1;
}
.qbtn.check {
    color: #df5730;
}
.boot .qbtn {
    color: #a3a8b4;
}
.boot .qbtn.check {
    color: #86716c;
}
.qdrop {
    width: 14px;
    display: flex;
    justify-content: center;
}
.utilities .qdrop {
    color: #04246e;
}
.winbtns {
    display: flex;
    color: #888;
}
.winbtns button {
    width: 46px;
    height: 30px;
    display: flex;
    align-items: center;
    justify-content: center;
}
.winbtns svg {
    width: 10px;
    height: 10px;
}
.tabs {
    flex: none;
    display: flex;
    align-items: center;
    height: 24px;
    border-bottom: 1px solid #dadbdc;
}
.tab {
    width: 56px;
    height: 24px;
    padding-top: 1px;
}
.tab.file {
    background: #1f629c;
    color: #fff;
}
.tab.active {
    width: 58px;
    margin-right: 2px;
    background: #f5f6f7;
    border-right: 1px solid #dadbdc;
}
.collapse {
    margin-left: auto;
    margin-right: 8px;
    color: #999;
}
.collapse svg {
    width: 12px;
    height: 12px;
    transform: rotate(180deg);
}
.help {
    width: 16px;
    height: 16px;
    margin-right: 3px;
    border-radius: 8px;
    background: #0b62b5;
    color: #fff;
    font-weight: bold;
    line-height: 16px;
}

/* ribbon */
.ribbon {
    flex: none;
    display: flex;
    height: 92px;
    background: #f5f6f7;
    border-bottom: 1px solid #dadbdc;
}
.group {
    display: flex;
    flex-direction: column;
    border-right: 1px solid #e2e3e4;
}
.group h2 {
    margin-top: auto;
    padding: 0 6px 1px 0;
    text-align: center;
    color: #555;
}
.tools {
    display: flex;
    padding-top: 4px;
}
.clipboard {
    width: 263px;
    padding-left: 5px;
}
.organize {
    width: 165px;
    padding-left: 8px;
}
.new {
    width: 83px;
    padding-left: 3px;
}
.open {
    width: 133px;
    padding-left: 4px;
}
.select {
    width: 115px;
    padding-left: 7px;
}
.big {
    width: 42px;
    height: 66px;
    display: flex;
    flex-direction: column;
    align-items: center;
    line-height: 13px;
}
.big svg {
    width: 32px;
    height: 32px;
    margin: 3px 0 3px;
}
.big .i8 {
    width: 8px;
    height: 8px;
    margin: 2px 0 0;
}
.pinbtn {
    width: 68px;
}
.new .big {
    width: 44px;
}
.props {
    width: 56px;
}
.stack {
    display: flex;
    flex-direction: column;
    padding-left: 4px;
}
.stack button {
    display: flex;
    align-items: center;
    gap: 3px;
    height: 22px;
    white-space: nowrap;
}
.stack button:disabled {
    color: #777;
}
.two {
    gap: 7px;
    padding: 8px 5px 0 4px;
    margin-left: -4px;
}
.two.ruled {
    margin-left: 0;
    padding-left: 6px;
    border-left: 1px solid #e2e3e4;
}
.tight {
    padding-left: 3px;
}
.tight button {
    gap: 0;
}
.select .stack {
    padding-left: 0;
}

/* address bar */
.address {
    flex: none;
    display: flex;
    align-items: center;
    height: 40px;
    margin-bottom: 2px;
    padding: 0 12px 0 7px;
    color: #666;
}
.nav {
    width: 24px;
    display: flex;
    justify-content: center;
}
.nav svg {
    width: 14px;
    height: 14px;
}
.nav:disabled {
    margin-left: 5px;
    color: #d5d5d5;
}
.nav.recent {
    width: 21px;
}
.nav.recent svg {
    width: 8px;
    height: 8px;
}
.crumbs {
    flex: 1;
    display: flex;
    align-items: center;
    height: 30px;
    gap: 6px;
    margin-left: 1px;
    padding-left: 3px;
    border: 1px solid #d9d9d9;
}
.crumbs a {
    color: #111;
}
.crumbs button {
    width: 30px;
    height: 28px;
    display: flex;
    align-items: center;
    justify-content: center;
}
.crumbs .history {
    margin-left: auto;
    margin-right: -6px;
}
.crumbs .history svg {
    width: 12px;
    height: 12px;
}
.crumbs .refresh {
    border-left: 1px solid #d9d9d9;
}
.refresh svg, .search svg {
    width: 14px;
    height: 14px;
}
.search {
    display: flex;
    align-items: center;
    width: 202px;
    height: 30px;
    margin-left: 12px;
    padding: 0 7px 0 8px;
    border: 1px solid #d9d9d9;
}
.search input {
    flex: 1;
    min-width: 0;
    padding: 0;
    border: 0;
    outline: 0;
    background: none;
    font: inherit;
}
.search input::placeholder {
    color: #6d6d6d;
}

/* tree + files */
.content {
    flex: 1;
    min-height: 0;
    display: flex;
}
.tree {
    width: 139px;
    overflow: hidden;
}
.tree li {
    display: flex;
    align-items: center;
    gap: 5px;
    height: 24px;
    padding-left: 32px;
    white-space: nowrap;
}
.tree .l2 {
    padding-left: 40px;
}
.tree .l3 {
    padding-left: 48px;
}
.tree .current {
    background: #d9d9d9;
}
.scrollbar {
    flex: none;
    display: flex;
    flex-direction: column;
    width: 17px;
    padding-left: 1px;
    background: #f0f0f0;
    background-clip: content-box;
    color: #555;
}
.scrollbar button {
    height: 17px;
    display: flex;
    align-items: center;
    justify-content: center;
}
.scrollbar svg {
    width: 10px;
    height: 10px;
}
.track {
    flex: 1;
    padding-top: 112px;
}
.thumb {
    height: 156px;
    background: #c6c6c6;
}
.files {
    flex: 1;
    display: grid;
    grid-template-columns: 250px 250px;
    grid-auto-rows: 52px;
    gap: 4px;
    padding: 6px 0 0 18px;
}
.tile {
    display: flex;
    gap: 13px;
    padding: 8px 11px 0;
    border: 1px solid transparent;
}
.tile svg {
    width: 32px;
    height: 42px;
    margin-top: -3px;
}
.tile.selected {
    background: #cce8ff;
    border-color: #8fc8ef;
}
.tile.hover {
    background: #e5f3ff;
}
.status {
    flex: none;
    display: flex;
    align-items: center;
    gap: 21px;
    height: 23px;
    padding: 0 8px 0 14px;
    color: #2f3c4e;
}
.views {
    display: flex;
    gap: 8px;
    margin-left: auto;
}
.v1 {
    width: 16px;
    height: 13px;
}
.v2 {
    width: 14px;
    height: 12px;
}
.boot-body {
    flex: 1;
    padding-top: 240px;
}
.boot-row {
    height: 24px;
    background: #d9d9d9;
}

/* console */
.console {
    position: absolute;
    left: 514px;
    top: 263px;
    right: 0;
    bottom: 0;
    overflow: hidden;
    background: #0c0c0c;
    border-left: 1px solid #2e2e2e;
}
.console-title {
    height: 30px;
    background: #fff;
}
.console-text {
    display: flex;
    flex-direction: column;
    gap: 176px;
    padding: 81px 0 0 424px;
    color: #ccc;
}
.console-text p {
    font-family: "Liberation Mono", monospace;
    font-size: 13px;
}
.cursor {
    position: absolute;
    left: 383px;
    top: 512px;
    width: 12px;
    height: 20px;
}

/* taskbar */
.taskbar {
    flex: none;
    display: flex;
    align-items: center;
    height: 40px;
    background: linear-gradient(to right, #1f3f5a, #1e3850 60%, #243f57);
    color: #fff;
}
.start {
    width: 48px;
    margin-right: 4px;
    display: flex;
    justify-content: center;
}
.start svg {
    width: 20px;
    height: 20px;
}
.task {
    width: 158px;
    height: 38px;
    display: flex;
    align-items: center;
    gap: 5px;
    padding-left: 7px;
    border: 1px solid #8397a6;
    background: #4c6274;
}
.task svg {
    width: 24px;
    height: 24px;
}
.task.active {
    margin-left: 2px;
    background: linear-gradient(to right, #667788, #7d8b99);
    border-color: #e8edf0;
}
.pinned {
    display: flex;
    padding: 0 2px 0 1px;
}
.pinned button {
    width: 49px;
    display: flex;
    justify-content: center;
}
.pinned svg {
    width: 24px;
    height: 24px;
}
.tray {
    display: flex;
    align-items: center;
    gap: 8px;
    margin-left: auto;
    padding-right: 20px;
}
.tray svg {
    width: 16px;
    height: 16px;
}
.tray time {
    margin-left: 5px;
    line-height: 18px;
    text-align: center;
}
```
